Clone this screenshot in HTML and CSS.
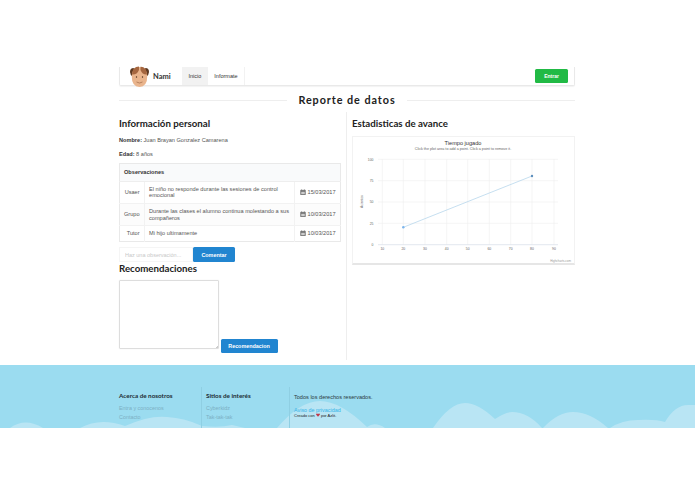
FILE: index.html
```html
<!DOCTYPE html>
<html lang="es">
<head>
    <meta charset="UTF-8">
    <title>Reporte de datos</title>
    <link rel="stylesheet" href="styles.css">
</head>
<body>
    <div class="container">
        <div class="navbar">
            <a class="brand">
                <svg class="logo" viewBox="0 0 19 21" width="19" height="21">
                    <path d="M0 6Q0 2 3.500 2L5 4L2.500 10.500Q.3 9.500 0 6Z" fill="#5e3a22"/>
                    <path d="M19 6Q19 2 15.500 2L14 4L16.500 10.500Q18.700 9.500 19 6Z" fill="#5e3a22"/>
                    <path d="M1.800 11Q1.800 1 9.500 1Q17.200 1 17.200 11Q17.200 20.500 9.500 21Q1.800 20.500 1.800 11Z" fill="#e9b48c"/>
                    <path d="M2 8.500Q2.500 .5 9 .5L9 4Q7 9 2 8.500Z" fill="#a5663f"/>
                    <path d="M17 8.500Q16.500 .5 10.500 .8L10.500 4Q12.500 9 17 8.500Z" fill="#a5663f"/>
                    <circle cx="6.500" cy="11" r=".7" fill="#4a2c18"/>
                    <circle cx="12.500" cy="11" r=".7" fill="#4a2c18"/>
                    <path d="M6.500 16Q9.500 18 12.500 16" fill="none" stroke="#a06a48" stroke-width=".7"/>
                </svg>
                <span>Nami</span>
            </a>
            <a class="nav-item active">Inicio</a>
            <a class="nav-item bordered">Informate</a>
            <a class="btn-green">Entrar</a>
        </div>

        <div class="page-title">
            <h1>Reporte de datos</h1>
        </div>

        <div class="columns">
            <div class="left">
                <h2>Información personal</h2>
                <p class="info"><strong>Nombre:</strong> Juan Brayan Gonzalez Camarena</p>
                <p class="info"><strong>Edad:</strong> 8 años</p>
                <table class="obs">
                    <thead>
                        <tr><th colspan="3">Observaciones</th></tr>
                    </thead>
                    <tbody>
                        <tr>
                            <td class="who">Usaer</td>
                            <td>El niño no responde durante las sesiones de control emocional</td>
                            <td class="date"><svg class="cal" viewBox="0 0 10 10" width="6" height="6"><path d="M1 2h8v7.500H1z M2.500 .5v2 M7.500 .5v2" fill="#666" stroke="#666" stroke-width=".8"/><path d="M2 4.500h6v4H2z" fill="#ccc"/></svg> 15/03/2017</td>
                        </tr>
                        <tr>
                            <td class="who">Grupo</td>
                            <td>Durante las clases el alumno continua molestando a sus compañeros</td>
                            <td class="date"><svg class="cal" viewBox="0 0 10 10" width="6" height="6"><path d="M1 2h8v7.500H1z M2.500 .5v2 M7.500 .5v2" fill="#666" stroke="#666" stroke-width=".8"/><path d="M2 4.500h6v4H2z" fill="#ccc"/></svg> 10/03/2017</td>
                        </tr>
                        <tr>
                            <td class="who">Tutor</td>
                            <td>Mi hijo ultimamente</td>
                            <td class="date"><svg class="cal" viewBox="0 0 10 10" width="6" height="6"><path d="M1 2h8v7.500H1z M2.500 .5v2 M7.500 .5v2" fill="#666" stroke="#666" stroke-width=".8"/><path d="M2 4.500h6v4H2z" fill="#ccc"/></svg> 10/03/2017</td>
                        </tr>
                    </tbody>
                </table>
                <div class="comment">
                    <input type="text" placeholder="Haz una observación...">
                    <button class="btn-blue">Comentar</button>
                </div>
                <h2 class="rec-title">Recomendaciones</h2>
                <div class="rec">
                    <textarea></textarea>
                    <button class="btn-blue wide">Recomendacion</button>
                </div>
            </div>
            <div class="right">
                <h2>Estadisticas de avance</h2>
                <div class="chart">
                    <svg viewBox="1 1 221 126" width="221" height="126">
                        <text x="111" y="8.500" class="c-title" text-anchor="middle">Tiempo jugado</text>
                        <text x="111" y="14" class="c-sub" text-anchor="middle">Click the plot area to add a point. Click a point to remove it.</text>
                        <g stroke="#efefef" stroke-width=".6">
                            <path d="M26 23.300H206M26 44.700H206M26 66H206M26 87.300H206"/>
                            <path d="M30.300 23.300V108.700M51.300 23.300V108.700M73 23.300V108.700M94.700 23.300V108.700M115.700 23.300V108.700M137.300 23.300V108.700M158.700 23.300V108.700M180 23.300V108.700M202 23.300V108.700"/>
                        </g>
                        <path d="M26 108.700H206" stroke="#d5dce8" stroke-width=".7"/>
                        <g class="c-tick" text-anchor="end">
                            <text x="21.500" y="24.500">100</text>
                            <text x="21.500" y="45.900">75</text>
                            <text x="21.500" y="67.200">50</text>
                            <text x="21.500" y="88.500">25</text>
                            <text x="21.500" y="109.900">0</text>
                        </g>
                        <g class="c-tick" text-anchor="middle">
                            <text x="30.300" y="114.300">10</text>
                            <text x="51.300" y="114.300">20</text>
                            <text x="73" y="114.300">30</text>
                            <text x="94.700" y="114.300">40</text>
                            <text x="115.700" y="114.300">50</text>
                            <text x="137.300" y="114.300">60</text>
                            <text x="158.700" y="114.300">70</text>
                            <text x="180" y="114.300">80</text>
                            <text x="202" y="114.300">90</text>
                        </g>
                        <text class="c-tick" x="11" y="65.500" text-anchor="middle" transform="rotate(-90 11 65.500)">Acientos</text>
                        <path d="M51.300 91.300L180 40" stroke="#b7d7ec" stroke-width=".8" fill="none"/>
                        <circle cx="51.300" cy="91.300" r="1.200" fill="#7cb5ec"/>
                        <circle cx="180" cy="40" r="1.200" fill="#5d8fbd"/>
                        <text class="c-credit" x="219" y="126" text-anchor="end">Highcharts.com</text>
                    </svg>
                </div>
            </div>
        </div>
    </div>

    <footer class="footer">
        <svg class="clouds" viewBox="0 0 695 63" width="695" height="63">
            <path fill="#b9e5f4" d="M10 63Q25 52 43 63Z M80 63Q100 52 125 61Q150 50 167 52Q185 53 202 61Q220 63 232 60L245 63Z M277 63Q300 36 320 36Q340 36 367 62Q375 56 385 63Z M433 63Q450 38 465 38Q478 38 495 54Q505 47 512 47Q528 47 542 63Z M543 63Q558 47 573 47Q590 47 608 63Z M610 63Q622 55 638 55Q655 54 665 57Q675 40 688 40L695 40V63Z"/>
        </svg>
        <div class="footer-inner">
            <div class="f-col first">
                <h4>Acerca de nosotros</h4>
                <a>Entra y conocenos</a>
                <a>Contacto</a>
            </div>
            <div class="f-col second">
                <h4>Sitios de interés</h4>
                <a>Cyberkidz</a>
                <a>Tak-tak-tak</a>
            </div>
            <div class="f-col third">
                <p class="rights">Todos los derechos reservados.</p>
                <a class="privacy">Aviso de privacidad</a>
                <p class="made">Creado con <svg class="heart" viewBox="0 0 10 9" width="4" height="4"><path d="M5 9L.5 4Q-.5 1 2.500 .5Q4 .5 5 2Q6 .5 7.500 .5Q10.500 1 9.500 4Z" fill="#c0394b"/></svg> por Azlit.</p>
            </div>
        </div>
    </footer>
</body>
</html>
```

FILE: styles.css
```css
body {
    margin: 0;
    padding: 0;
    background-color: white;
    font-family: "Liberation Sans", Arial, sans-serif;
    font-size: 5.600px;
    color: #333;
}
.container {
    width: 456px;
    margin-left: 119px;
    padding-top: 67px;
}
.navbar {
    display: flex;
    align-items: center;
    height: 18px;
    border: 1px solid #e9e9e9;
    border-top: none;
    border-radius: 0 0 2px 2px;
    box-shadow: 0 1px 1px rgba(0,0,0,0.05);
}
.brand {
    display: flex;
    align-items: center;
    gap: 4px;
    padding-left: 10px;
    width: 52px;
    font-family: Lato, sans-serif;
    font-weight: 700;
    font-size: 7.500px;
    color: #333;
}
.logo {
    flex-shrink: 0;
}
.nav-item {
    height: 18px;
    line-height: 18px;
    padding: 0 6.500px;
    font-size: 5.500px;
}
.nav-item.active {
    background-color: #f2f2f2;
}
.nav-item.bordered {
    border-right: 1px solid #f2f2f2;
}
.btn-green {
    margin-left: auto;
    margin-right: 6px;
    width: 33px;
    height: 14px;
    line-height: 14px;
    text-align: center;
    color: white;
    background-color: #21ba45;
    border-radius: 1.500px;
    font-size: 5px;
    font-weight: bold;
}
.page-title {
    display: flex;
    align-items: center;
    gap: 11px;
    margin-top: 6px;
}
.page-title::before,
.page-title::after {
    content: "";
    flex: 1;
    border-top: 1px solid #eeeeee;
}
.page-title h1 {
    margin: 0;
    font-family: Lato, sans-serif;
    font-size: 10.800px;
    line-height: 16px;
    letter-spacing: .95px;
    font-weight: 700;
    color: #222;
}
.columns {
    display: flex;
    margin-top: 4px;
    margin-bottom: 5px;
}
.left {
    width: 222px;
    padding-right: 5px;
    padding-bottom: 7px;
    border-right: 1px solid #eeeeee;
}
.right {
    padding-left: 5px;
    flex: 1;
}
h2 {
    margin: 0;
    font-family: Lato, sans-serif;
    font-size: 9.700px;
    line-height: 13px;
    font-weight: 700;
    color: #222;
}
.left > h2:first-child,
.right > h2 {
    margin-top: 5px;
}
.info {
    margin: 7px 0 0;
    line-height: 7px;
    color: #555;
}
.info strong {
    color: #333;
}
.info + .info {
    margin-top: 6.500px;
}
.obs {
    width: 100%;
    margin-top: 5px;
    border-collapse: collapse;
    border: 1px solid #e9e9e9;
    line-height: 6.700px;
}
.obs th {
    text-align: left;
    padding: 5px 4px;
    height: 7px;
    background-color: #f9fafb;
    border-bottom: 1px solid #eeeeee;
}
.obs td {
    padding: 4px 4.500px;
    border-top: 1px solid #f2f2f2;
    border-left: 1px solid #f2f2f2;
    color: #555;
}
.obs tr:nth-child(even) td {
    background-color: #fcfcfc;
}
.obs td.who {
    width: 15px;
    text-align: right;
    padding: 4px;
    border-left: none;
}
.obs td.date {
    width: 36px;
    white-space: nowrap;
    padding: 4px 4px 4px 5px;
}
.cal {
    vertical-align: -1px;
}
.comment {
    display: flex;
    margin-top: 5px;
}
.comment input {
    width: 74px;
    height: 15px;
    box-sizing: border-box;
    border: 1px solid #f5f5f5;
    padding: 0 5px;
    font-family: inherit;
    font-size: 5.500px;
}
.comment input::placeholder {
    color: #c8c8c8;
}
.btn-blue {
    width: 42px;
    height: 15px;
    padding: 0;
    border: none;
    border-radius: 1.500px;
    background-color: #2185d0;
    color: white;
    font-family: inherit;
    font-size: 5.400px;
    font-weight: bold;
}
.btn-blue.wide {
    width: 57px;
    height: 14px;
    vertical-align: 1px;
}
.rec-title {
    margin-top: 0;
}
.rec {
    margin-top: 5px;
    line-height: 6px;
}
.rec textarea {
    width: 100px;
    height: 69px;
    box-sizing: border-box;
    margin: 0;
    border: 1px solid #ddd;
    border-radius: 1px;
    box-shadow: 0 0 1px #ddd;
    resize: none;
    background: linear-gradient(135deg, transparent 60%, #ccc 60%) no-repeat bottom right / 3px 3px;
}
.chart {
    margin-top: 5.500px;
    border: 1px solid #f2f2f2;
    border-bottom: 2px solid #e6e6e6;
    width: 221px;
    height: 126px;
    overflow: hidden;
}
.chart svg {
    display: block;
}
.c-title {
    font-size: 5.600px;
    fill: #333;
}
.c-sub {
    font-size: 3.700px;
    fill: #666;
}
.c-tick {
    font-size: 3.400px;
    fill: #666;
}
.c-credit {
    font-size: 3px;
    fill: #999;
}
.footer {
    position: relative;
    height: 63px;
    background-color: #9bdcf0;
    overflow: hidden;
}
.clouds {
    position: absolute;
    left: 0;
    top: 0;
}
.footer-inner {
    position: relative;
    display: flex;
    width: 456px;
    height: 63px;
    margin-left: 119px;
    box-sizing: border-box;
    padding-top: 22px;
}
.f-col {
    box-sizing: border-box;
    height: 41px;
}
.f-col.first {
    width: 81.500px;
}
.f-col.second {
    width: 88px;
    padding-left: 4.500px;
    border-left: 1px solid #8fcfe3;
}
.f-col.third {
    flex: 1;
    padding-left: 4.500px;
    border-left: 1px solid #8fcfe3;
}
.f-col h4 {
    margin: 4px 0 4.200px;
    font-family: Lato, sans-serif;
    font-size: 6.300px;
    line-height: 9px;
    font-weight: 700;
    color: #1b2b33;
}
.f-col a {
    display: block;
    font-size: 5.400px;
    line-height: 9px;
    color: #7bb0c4;
}
.rights {
    margin: 6px 0 5.700px;
    font-size: 5.570px;
    line-height: 8px;
    color: #2b3b42;
}
.f-col a.privacy {
    color: #35b4e8;
    line-height: 6px;
}
.made {
    margin: 0;
    font-size: 4px;
    line-height: 5px;
    color: #222;
}
.heart {
    vertical-align: -.5px;
}
```
